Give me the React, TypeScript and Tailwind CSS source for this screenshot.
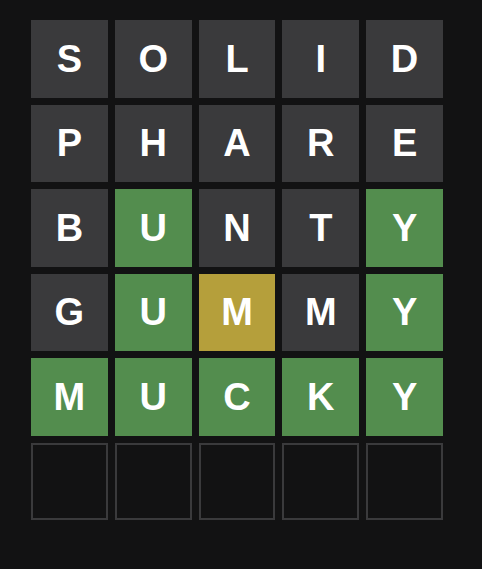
const rows: { word: string; states: string }[] = [
  { word: "SOLID", states: "aaaaa" },
  { word: "PHARE", states: "aaaaa" },
  { word: "BUNTY", states: "agaag" },
  { word: "GUMMY", states: "agyag" },
  { word: "MUCKY", states: "ggggg" },
  { word: "     ", states: "eeeee" },
];

function Tile({ letter, state }: { letter: string; state: string }) {
  const color =
    state === "g"
      ? "bg-[#538d4e]"
      : state === "y"
      ? "bg-[#b59f3b]"
      : state === "a"
      ? "bg-[#3a3a3c]"
      : "border-2 border-[#3a3a3c]";

  return (
    <div className={`flex items-center justify-center text-white font-bold text-[38px] leading-none ${color}`}>
      {letter.trim()}
    </div>
  );
}

export default function App() {
  return (
    <div className="min-h-screen w-full bg-[#121213] pl-[31px] pt-[20px]" style={{ fontFamily: '"Liberation Sans", Arial, sans-serif' }}>
      <div className="grid grid-cols-5 grid-rows-6 gap-[7px] w-[412px] h-[500px]">
        {rows.map((r, i) =>
          r.word.split("").map((ch, j) => (
            <Tile key={`${i}-${j}`} letter={ch} state={r.states[j]} />
          ))
        )}
      </div>
    </div>
  );
}
